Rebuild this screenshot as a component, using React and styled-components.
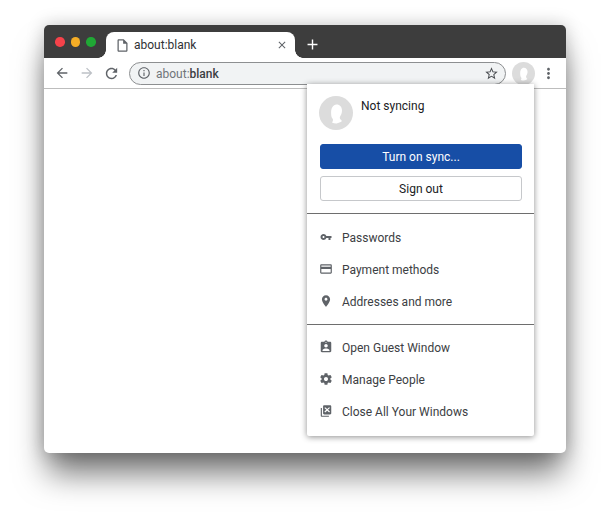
import React from 'react';
import styled, { createGlobalStyle } from 'styled-components';

const GlobalStyle = createGlobalStyle`
  html, body {
    margin: 0;
    background: #ffffff;
  }
  body {
    font-family: 'Roboto', 'Liberation Sans', sans-serif;
  }
`;

const ICONS = {
  file: 'M14 2H6c-1.1 0-1.99.9-1.99 2L4 20c0 1.1.89 2 1.99 2H18c1.1 0 2-.9 2-2V8l-6-6zM6 20V4h7v5h5v11H6z',
  close: 'M19 6.41L17.59 5 12 10.59 6.41 5 5 6.41 10.59 12 5 17.59 6.41 19 12 13.41 17.59 19 19 17.59 13.41 12z',
  add: 'M19 13h-6v6h-2v-6H5v-2h6V5h2v6h6v2z',
  back: 'M20 11H7.83l5.59-5.59L12 4l-8 8 8 8 1.41-1.41L7.83 13H20v-2z',
  forward: 'M12 4l-1.41 1.41L16.17 11H4v2h12.17l-5.58 5.59L12 20l8-8z',
  reload: 'M17.65 6.35C16.2 4.9 14.21 4 12 4c-4.42 0-7.99 3.58-7.99 8s3.57 8 7.99 8c3.73 0 6.84-2.55 7.73-6h-2.08c-.82 2.33-3.04 4-5.65 4-3.31 0-6-2.69-6-6s2.69-6 6-6c1.66 0 3.14.69 4.22 1.78L13 11h7V4l-2.35 2.35z',
  info: 'M11 17h2v-6h-2v6zm1-15C6.48 2 2 6.48 2 12s4.48 10 10 10 10-4.48 10-10S17.52 2 12 2zm0 18c-4.41 0-8-3.59-8-8s3.59-8 8-8 8 3.59 8 8-3.59 8-8 8zm-1-11h2V7h-2v2z',
  star: 'M22 9.24l-7.19-.62L12 2 9.19 8.63 2 9.24l5.46 4.73L5.82 21 12 17.27 18.18 21l-1.63-7.03L22 9.24zM12 15.4l-3.76 2.27 1-4.28-3.32-2.88 4.38-.38L12 6.1l1.71 4.04 4.38.38-3.32 2.88 1 4.28L12 15.4z',
  more: 'M12 8c1.1 0 2-.9 2-2s-.9-2-2-2-2 .9-2 2 .9 2 2 2zm0 2c-1.1 0-2 .9-2 2s.9 2 2 2 2-.9 2-2-.9-2-2-2zm0 6c-1.1 0-2 .9-2 2s.9 2 2 2 2-.9 2-2-.9-2-2-2z',
  key: 'M12.65 10C11.83 7.67 9.61 6 7 6c-3.31 0-6 2.69-6 6s2.69 6 6 6c2.61 0 4.83-1.67 5.65-4H17v4h4v-4h2v-4H12.65zM7 14c-1.1 0-2-.9-2-2s.9-2 2-2 2 .9 2 2-.9 2-2 2z',
  card: 'M20 4H4c-1.11 0-1.99.89-1.99 2L2 18c0 1.11.89 2 2 2h16c1.11 0 2-.89 2-2V6c0-1.11-.89-2-2-2zm0 14H4v-6h16v6zm0-10H4V6h16v2z',
  place: 'M12 2C8.13 2 5 5.13 5 9c0 5.25 7 13 7 13s7-7.75 7-13c0-3.87-3.13-7-7-7zm0 9.5c-1.38 0-2.5-1.12-2.5-2.5s1.12-2.5 2.5-2.5 2.5 1.12 2.5 2.5-1.12 2.5-2.5 2.5z',
  guest: 'M19 3h-4.18C14.4 1.84 13.3 1 12 1c-1.3 0-2.4.84-2.82 2H5c-1.1 0-2 .9-2 2v14c0 1.1.9 2 2 2h14c1.1 0 2-.9 2-2V5c0-1.1-.9-2-2-2zm-7 0c.55 0 1 .45 1 1s-.45 1-1 1-1-.45-1-1 .45-1 1-1zm0 4c1.66 0 3 1.34 3 3s-1.34 3-3 3-3-1.34-3-3 1.34-3 3-3zm6 12H6v-1.4c0-2 4-3.1 6-3.1s6 1.1 6 3.1V19z',
  gear: 'M19.43 12.98c.04-.32.07-.64.07-.98s-.03-.66-.07-.98l2.11-1.65c.19-.15.24-.42.12-.64l-2-3.46c-.12-.22-.39-.3-.61-.22l-2.49 1c-.52-.4-1.08-.73-1.69-.98l-.38-2.65C14.46 2.18 14.25 2 14 2h-4c-.25 0-.46.18-.49.42l-.38 2.65c-.61.25-1.17.59-1.69.98l-2.49-1c-.23-.09-.49 0-.61.22l-2 3.46c-.13.22-.07.49.12.64l2.11 1.65c-.04.32-.07.65-.07.98s.03.66.07.98l-2.11 1.65c-.19.15-.24.42-.12.64l2 3.46c.12.22.39.3.61.22l2.49-1c.52.4 1.08.73 1.69.98l.38 2.65c.03.24.24.42.49.42h4c.25 0 .46-.18.49-.42l.38-2.65c.61-.25 1.17-.59 1.69-.98l2.49 1c.23.09.49 0 .61-.22l2-3.46c.12-.22.07-.49-.12-.64l-2.11-1.65zM12 15.5c-1.93 0-3.5-1.57-3.5-3.5s1.57-3.5 3.5-3.5 3.5 1.57 3.5 3.5-1.57 3.5-3.5 3.5z',
  closeAll: 'M3 7h2v13h12v2H5c-1.1 0-2-.9-2-2V7zm6-5h10c1.1 0 2 .9 2 2v12c0 1.1-.9 2-2 2H9c-1.1 0-2-.9-2-2V4c0-1.1.9-2 2-2zm1.6 3.6L9.2 7l3.4 3-3.4 3 1.4 1.4 3.4-3 3.4 3 1.4-1.4-3.4-3 3.4-3-1.4-1.4-3.4 3-3.4-3z',
};

const SECTIONS = [
  [
    { icon: 'key', size: 12, label: 'Passwords' },
    { icon: 'card', size: 14, label: 'Payment methods' },
    { icon: 'place', size: 14, label: 'Addresses and more' },
  ],
  [
    { icon: 'guest', size: 14, label: 'Open Guest Window' },
    { icon: 'gear', size: 14, label: 'Manage People' },
    { icon: 'closeAll', size: 14, label: 'Close All Your Windows' },
  ],
];

function Icon({ name, size, color }) {
  return (
    <svg width={size} height={size} viewBox="0 0 24 24" fill={color} fillRule="evenodd" style={{ display: 'block' }}>
      <path d={ICONS[name]} />
    </svg>
  );
}

function Avatar({ size }) {
  return (
    <AvatarCircle $size={size}>
      <svg width={size} height={size} viewBox="0 0 34 34">
        <path
          fill="#ffffff"
          d="M17.5 8.5c3.4 0 5.5 2.6 5.5 6 0 2.6-1 4.5-1.9 6-.5.9-.4 1.8.1 2.6.5.7 1.1 1.3 1.8 2-1.6 1.3-3.4 2.2-5.4 2.4-1.7.1-3.1-.3-4.6-1 .6-.7 1-1.6 1-2.4 0-1-.6-1.6-1.1-2.3-.6-1.2-.8-3.2-.8-5.2 0-4.4 2-8.1 5.4-8.1z"
        />
      </svg>
    </AvatarCircle>
  );
}

export default function App() {
  return (
    <>
      <GlobalStyle />
      <Page>
        <BrowserWindow>
          <TitleBar>
            <Lights>
              <Light $color="#f5424a" />
              <Light $color="#f5ad26" />
              <Light $color="#20a835" />
            </Lights>
            <Tab>
              <Icon name="file" size={15} color="#5f6368" />
              <TabTitle>about:blank</TabTitle>
              <TabClose>
                <Icon name="close" size={12} color="#5f6368" />
              </TabClose>
            </Tab>
            <NewTab>
              <Icon name="add" size={17} color="#ffffff" />
            </NewTab>
          </TitleBar>
          <Toolbar>
            <ToolButton><Icon name="back" size={16} color="#5f6368" /></ToolButton>
            <ToolButton><Icon name="forward" size={16} color="#bdc1c6" /></ToolButton>
            <ToolButton><Icon name="reload" size={17} color="#5f6368" /></ToolButton>
            <Omnibox>
              <Icon name="info" size={14} color="#5f6368" />
              <Url>about:<strong>blank</strong></Url>
              <Icon name="star" size={15} color="#4a4d51" />
            </Omnibox>
            <Avatar size={23} />
            <MoreButton><Icon name="more" size={17} color="#5f6368" /></MoreButton>
          </Toolbar>
          <Content />
          <ProfileMenu>
            <Identity>
              <Avatar size={34} />
              <Status>Not syncing</Status>
            </Identity>
            <Actions>
              <Button $primary>Turn on sync...</Button>
              <Button>Sign out</Button>
            </Actions>
            {SECTIONS.map((items) => (
              <Section key={items[0].label}>
                {items.map((item) => (
                  <MenuRow key={item.label}>
                    <MenuIcon><Icon name={item.icon} size={item.size} color="#5f6368" /></MenuIcon>
                    <RowLabel>{item.label}</RowLabel>
                  </MenuRow>
                ))}
              </Section>
            ))}
          </ProfileMenu>
        </BrowserWindow>
      </Page>
    </>
  );
}

const Page = styled.div`
  box-sizing: border-box;
  height: 516px;
  overflow: hidden;
  padding: 25px 44px 0;
`;
const BrowserWindow = styled.div`
  background: #ffffff;
  border-radius: 5px;
  box-shadow: 0 0 18px rgba(0, 0, 0, 0.22), 0 24px 32px -4px rgba(0, 0, 0, 0.55);
  display: flex;
  flex-direction: column;
  height: 428px;
  position: relative;
  width: 522px;
`;
const TitleBar = styled.div`
  align-items: flex-end;
  background: #3d3d3d;
  border-radius: 5px 5px 0 0;
  display: flex;
  height: 33px;
`;
const Lights = styled.div`
  align-items: center;
  align-self: flex-start;
  display: flex;
  gap: 6px;
  height: 34px;
  padding-left: 11px;
  width: 51px;
`;
const Light = styled.span`
  background: ${(p) => p.$color};
  border-radius: 50%;
  height: 9.5px;
  width: 9.5px;
`;
const Tab = styled.div`
  align-items: center;
  background: #ffffff;
  border-radius: 8px 8px 0 0;
  box-sizing: border-box;
  color: #2f3134;
  display: flex;
  font-size: 12px;
  height: 26px;
  padding: 0 7px 0 9px;
  position: relative;
  width: 189px;

  &::before,
  &::after {
    background: radial-gradient(circle at var(--cx) 0, #3d3d3d 7.5px, #ffffff 8px);
    bottom: 0;
    content: '';
    height: 8px;
    position: absolute;
    width: 8px;
  }
  &::before {
    --cx: 0;
    left: -8px;
  }
  &::after {
    --cx: 100%;
    right: -8px;
  }
`;
const TabTitle = styled.span`
  flex: 1;
  margin-left: 4px;
`;
const TabClose = styled.span`
  display: block;
`;
const NewTab = styled.span`
  box-sizing: border-box;
  display: block;
  height: 26px;
  margin-left: 9px;
  padding-top: 4px;
`;
const Toolbar = styled.div`
  align-items: center;
  border-bottom: 1px solid #bdbdbd;
  box-sizing: border-box;
  display: flex;
  height: 31px;
  padding: 0 5px 0 5px;
`;
const ToolButton = styled.span`
  display: flex;
  justify-content: center;
  width: 25px;
`;
const Omnibox = styled.div`
  align-items: center;
  background: #f1f3f4;
  border: 1px solid #8d8f91;
  border-radius: 12px;
  box-sizing: border-box;
  display: flex;
  flex: 1;
  height: 23px;
  margin: 0 6px 0 5px;
  padding: 0 6px 0 7px;
`;
const Url = styled.span`
  color: #70757a;
  flex: 1;
  font-size: 12px;
  margin-left: 5px;
  padding-top: 2px;

  strong {
    color: #3c4043;
    font-weight: 500;
  }
`;
const AvatarCircle = styled.span`
  background: #dcdcdc;
  border-radius: 50%;
  display: block;
  flex: none;
  height: ${(p) => p.$size}px;
  overflow: hidden;
  width: ${(p) => p.$size}px;

  svg {
    display: block;
  }
`;
const MoreButton = styled.span`
  display: flex;
  justify-content: center;
  width: 26px;
`;
const Content = styled.div`
  flex: 1;
`;
const ProfileMenu = styled.div`
  background: #ffffff;
  border-radius: 0 0 2px 2px;
  box-shadow: 0 1px 6px rgba(0, 0, 0, 0.45);
  box-sizing: border-box;
  height: 352px;
  position: absolute;
  right: 32px;
  top: 59px;
  width: 227px;
`;
const Identity = styled.div`
  box-sizing: border-box;
  display: flex;
  gap: 8px;
  height: 48px;
  padding: 12px 0 0 12px;
`;
const Status = styled.div`
  color: #202124;
  font-size: 12px;
  margin-top: 3px;
`;
const Actions = styled.div`
  display: flex;
  flex-direction: column;
  gap: 7px;
  padding: 12px 12px 12px 13px;
`;
const Button = styled.div`
  align-items: center;
  background: ${(p) => (p.$primary ? '#174ea6' : '#ffffff')};
  border: 1px solid ${(p) => (p.$primary ? '#174ea6' : '#c6c8cb')};
  border-radius: 3px;
  box-sizing: border-box;
  color: ${(p) => (p.$primary ? '#ffffff' : '#202124')};
  display: flex;
  font-size: 12px;
  height: 25px;
  justify-content: center;
`;
const Section = styled.div`
  border-top: 1px solid #6e6e6e;
  padding: 7px 0;

  & + & {
    padding-top: 6px;
  }
`;
const MenuRow = styled.div`
  align-items: center;
  color: #3c4043;
  display: flex;
  font-size: 12px;
  height: 32px;
  padding-left: 12px;
`;
const MenuIcon = styled.span`
  display: flex;
  justify-content: center;
  margin-right: 9px;
  width: 14px;
`;
const RowLabel = styled.span`
  padding-top: 2px;
`;
